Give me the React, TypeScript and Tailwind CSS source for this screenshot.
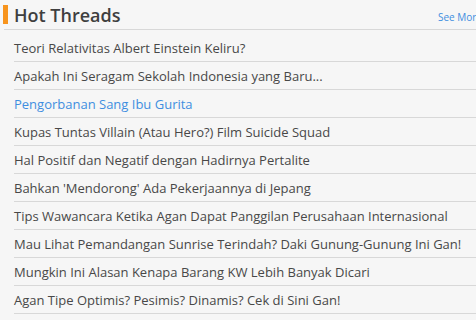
const threads = [
  { title: "Teori Relativitas Albert Einstein Keliru?" },
  { title: "Apakah Ini Seragam Sekolah Indonesia yang Baru..." },
  { title: "Pengorbanan Sang Ibu Gurita", active: true },
  { title: "Kupas Tuntas Villain (Atau Hero?) Film Suicide Squad" },
  { title: "Hal Positif dan Negatif dengan Hadirnya Pertalite" },
  { title: "Bahkan 'Mendorong' Ada Pekerjaannya di Jepang" },
  { title: "Tips Wawancara Ketika Agan Dapat Panggilan Perusahaan Internasional" },
  { title: "Mau Lihat Pemandangan Sunrise Terindah? Daki Gunung-Gunung Ini Gan!" },
  { title: "Mungkin Ini Alasan Kenapa Barang KW Lebih Banyak Dicari" },
  { title: "Agan Tipe Optimis? Pesimis? Dinamis? Cek di Sini Gan!" },
];

export default function App() {
  return (
    <div className="w-[476px] h-[320px] overflow-hidden bg-[#f6f6f6] font-['Open_Sans',sans-serif]">
      <div className="w-[500px]">
        {/* header */}
        <div className="ml-[4px] flex h-[30px] items-center justify-between border-b border-[#d8d8d8]">
          <div className="flex items-center">
            <span className="ml-[-1px] h-[19px] w-[5px] bg-[#f7941d]" />
            <h2 className="ml-[6px] mt-[1px] text-[18px] font-semibold leading-none text-[#3f3f3f]">Hot Threads</h2>
          </div>
          <a className="mr-[18px] mt-[6px] text-[10px] text-[#3f8ee0]">See More</a>
        </div>
        {/* list */}
        <ul className="mt-[4px] ml-[14px]">
          {threads.map((t) => (
            <li
              key={t.title}
              className={`h-[28px] border-b border-[#d8d8d8] pt-[1px] text-[13px] leading-[27px] whitespace-nowrap ${
                t.active ? "text-[#3f8ee0]" : "text-[#484848]"
              }`}
            >
              {t.title}
            </li>
          ))}
        </ul>
      </div>
    </div>
  );
}
